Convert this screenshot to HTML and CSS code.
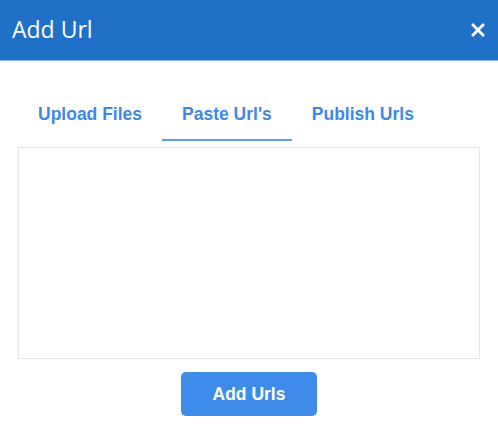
FILE: index.html
```html
<!DOCTYPE html>
<html>
<head>
<meta charset="utf-8">
<link rel="stylesheet" href="styles.css">
</head>
<body>
<div class="modal">
  <div class="header">
    <h1 class="title">Add Url</h1>
    <span class="close"><svg width="14" height="14" viewBox="0 0 14 14"><path d="M2.3 0.3 L7 5 L11.7 0.3 Q12 0 12.3 0.3 L13.7 1.7 Q14 2 13.7 2.3 L9 7 L13.7 11.7 Q14 12 13.7 12.3 L12.3 13.7 Q12 14 11.7 13.7 L7 9 L2.3 13.7 Q2 14 1.7 13.7 L0.3 12.3 Q0 12 0.3 11.7 L5 7 L0.3 2.3 Q0 2 0.3 1.7 L1.7 0.3 Q2 0 2.3 0.3 Z" fill="#fff"/></svg></span>
  </div>
  <div class="body">
    <div class="tabs">
      <div class="tab">Upload Files</div>
      <div class="tab active">Paste Url's</div>
      <div class="tab">Publish Urls</div>
    </div>
    <textarea class="urls"></textarea>
    <div class="actions">
      <button class="btn">Add Urls</button>
    </div>
  </div>
</div>
</body>
</html>
```
FILE: styles.css
```css
html, body { margin: 0; padding: 0; background: #fff; }
body { font-family: "Liberation Sans", Arial, sans-serif; }
.modal { width: 498px; height: 447px; }
.header {
  background: #2170c8;
  border-bottom: 1px solid #8db4e6;
  box-sizing: border-box;
  height: 61px;
  display: flex;
  align-items: center;
  justify-content: space-between;
  padding: 0 13px 0 12px;
}
.title {
  margin: 0;
  font-family: "Open Sans", sans-serif;
  font-weight: 400;
  font-size: 23px;
  color: #fff;
  line-height: 1;
  padding-bottom: 2px;
}
.close { display: flex; padding-bottom: 1px; }
.body { padding: 0 18px; }
.tabs {
  display: flex;
  margin-top: 30px;
  height: 50px;
}
.tab {
  font-weight: 700;
  font-size: 17.5px;
  color: #3d88e6;
  padding: 13px 20px 0;
  box-sizing: border-box;
  height: 50px;
  text-align: center;
}
.tab.active {
  border-bottom: 2px solid #5c9ded;
}
.urls {
  display: block;
  box-sizing: border-box;
  width: 462px;
  height: 212px;
  margin-top: 6px;
  border: 1px solid #e6e6e6;
  resize: none;
  outline: none;
}
.actions { display: flex; justify-content: center; margin-top: 13px; }
.btn {
  width: 136px;
  height: 44px;
  border: none;
  border-radius: 5px;
  background: #3f8bea;
  color: #fff;
  font-family: "Liberation Sans", Arial, sans-serif;
  font-weight: 700;
  font-size: 17.5px;
}
```
